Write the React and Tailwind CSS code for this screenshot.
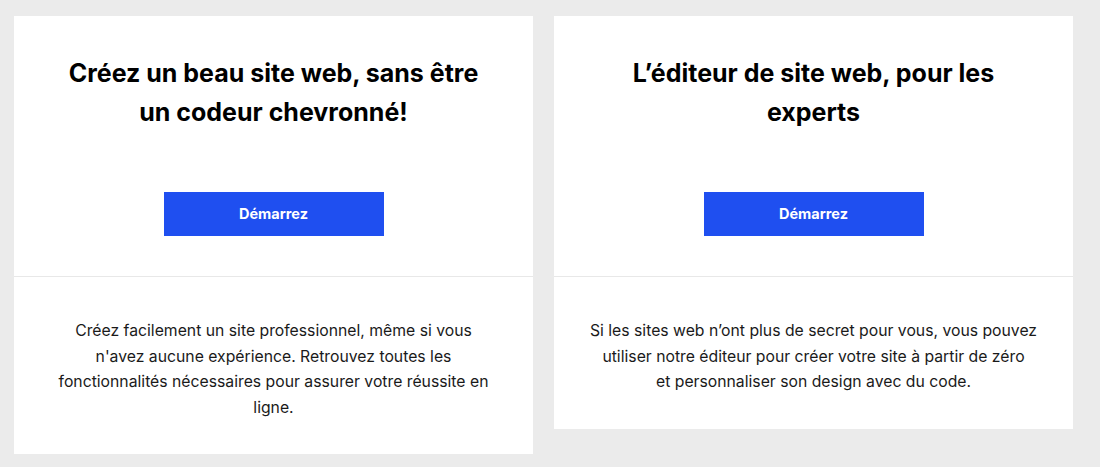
export default function App() {
  const cards = [
    {
      title: "Créez un beau site web, sans être un codeur chevronné!",
      body: (
        <>
          Créez facilement un site professionnel, même si vous n'avez aucune expérience. Retrouvez toutes les fonctionnalités nécessaires pour assurer votre réussite en ligne.
        </>
      ),
      pad: "px-[37px]",
    },
    {
      title: "L’éditeur de site web, pour les experts",
      body: (
        <>
          Si les sites web n’ont plus de secret pour vous, vous pouvez utiliser notre éditeur pour créer votre site à partir de zéro
          <br />
          et personnaliser son design avec du code.
        </>
      ),
      pad: "px-[30px]",
    },
  ];
  return (
    <div
      className="w-[1100px] h-[467px] bg-[#ebebeb] flex items-start gap-[21px] pl-[14px] pt-[16px]"
      style={{ fontFamily: "Inter, 'Noto Sans', sans-serif" }}
    >
      {cards.map((c, i) => (
        <div key={i} className="w-[519px] bg-white flex flex-col">
          <div className="flex flex-col items-center pt-[38px] pb-[40px] border-b border-[#e8e8e8]">
            <h2 className="w-[430px] text-center text-[25px] leading-[39px] font-bold text-black h-[78px]">
              {c.title}
            </h2>
            <button className="mt-[60px] w-[220px] h-[44px] bg-[#1f4ff0] text-white text-[14.5px] font-bold">
              Démarrez
            </button>
          </div>
          <p className={`${c.pad} pt-[41px] pb-[34px] text-center text-[15.75px] leading-[25.5px] text-[#1a1a1a]`}>
            {c.body}
          </p>
        </div>
      ))}
    </div>
  );
}
